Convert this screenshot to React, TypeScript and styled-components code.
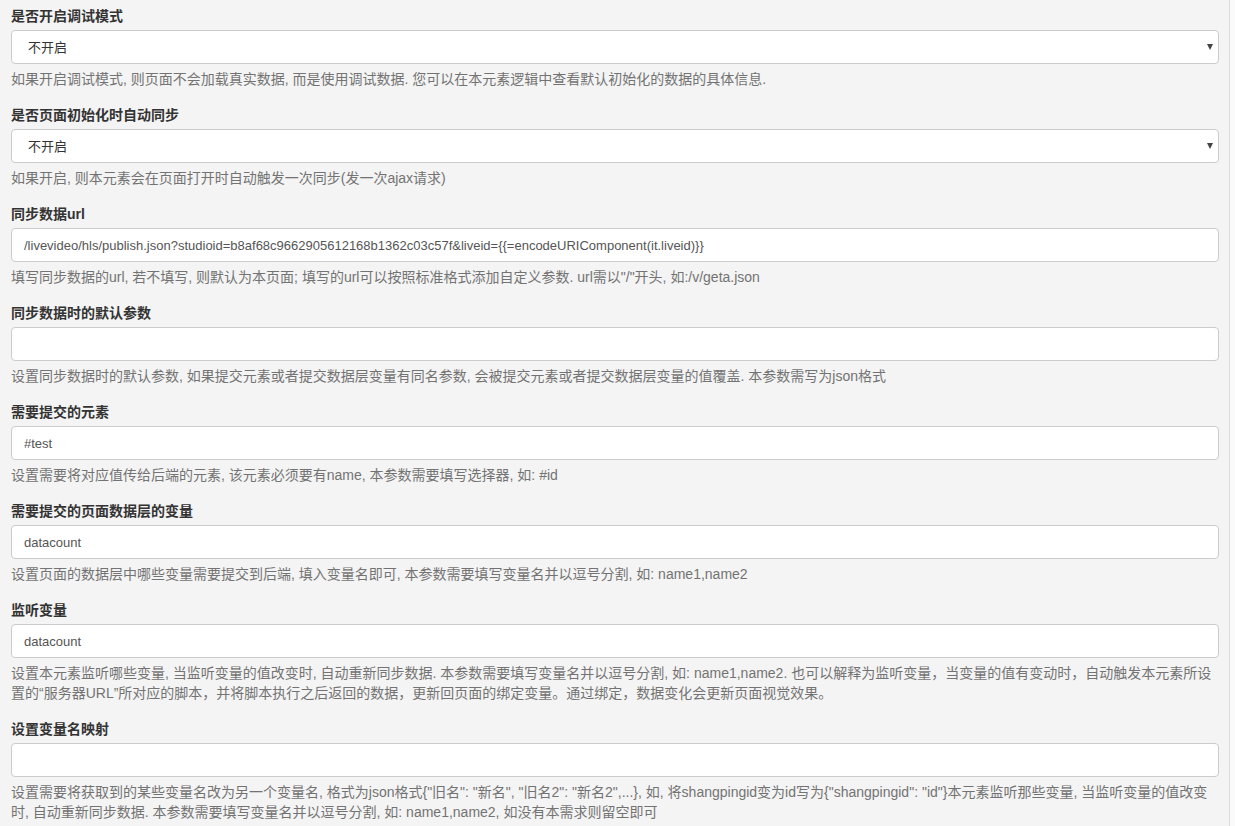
import React from 'react';
import styled, { createGlobalStyle } from 'styled-components';

const GlobalStyle = createGlobalStyle`
  html, body {
    margin: 0;
    padding: 0;
    background: #fafafa;
  }
  body {
    font-family: "Liberation Sans", "Noto Sans CJK SC", sans-serif;
    font-size: 14px;
    line-height: 20px;
    color: #333;
  }
`;

const Panel = styled.div`
  width: 1208px;
  min-height: 826px;
  box-sizing: content-box;
  padding: 6px 10px 0 11px;
  background: #f4f4f4;
  border-right: 1px solid #dcdcdc;
`;

const FormGroup = styled.div`
  display: flex;
  flex-direction: column;
  margin-bottom: 16px;
`;

const Label = styled.label`
  font-weight: bold;
  font-size: 14px;
  line-height: 20px;
  color: #333;
  margin-bottom: 4px;
`;

const TextInput = styled.input`
  box-sizing: border-box;
  width: 100%;
  height: 34px;
  padding: 6px 12px;
  font-family: inherit;
  font-size: 13px;
  color: #555;
  background: #fff;
  border: 1px solid #ccc;
  border-radius: 4px;
  outline: none;
`;

const SelectWrap = styled.div`
  position: relative;

  &::after {
    content: '';
    position: absolute;
    right: 6px;
    top: 14px;
    border-left: 3.5px solid transparent;
    border-right: 3.5px solid transparent;
    border-top: 6px solid #444;
    pointer-events: none;
  }
`;

const Select = styled.select`
  box-sizing: border-box;
  width: 100%;
  height: 34px;
  padding: 6px 16px;
  appearance: none;
  font-family: inherit;
  font-size: 13px;
  color: #333;
  background: #fff;
  border: 1px solid #ccc;
  border-radius: 4px;
  outline: none;
`;

const Help = styled.p`
  margin: 5px 0 0;
  font-size: 14px;
  line-height: 20px;
  color: #737373;
`;

type Field = {
  label: string;
  kind: 'select' | 'input';
  value: string;
  help: string;
};

const fields: Field[] = [
  {
    label: '是否开启调试模式',
    kind: 'select',
    value: '不开启',
    help: '如果开启调试模式, 则页面不会加载真实数据, 而是使用调试数据. 您可以在本元素逻辑中查看默认初始化的数据的具体信息.',
  },
  {
    label: '是否页面初始化时自动同步',
    kind: 'select',
    value: '不开启',
    help: '如果开启, 则本元素会在页面打开时自动触发一次同步(发一次ajax请求)',
  },
  {
    label: '同步数据url',
    kind: 'input',
    value: '/livevideo/hls/publish.json?studioid=b8af68c9662905612168b1362c03c57f&liveid={{=encodeURIComponent(it.liveid)}}',
    help: '填写同步数据的url, 若不填写, 则默认为本页面; 填写的url可以按照标准格式添加自定义参数. url需以"/"开头, 如:/v/geta.json',
  },
  {
    label: '同步数据时的默认参数',
    kind: 'input',
    value: '',
    help: '设置同步数据时的默认参数, 如果提交元素或者提交数据层变量有同名参数, 会被提交元素或者提交数据层变量的值覆盖. 本参数需写为json格式',
  },
  {
    label: '需要提交的元素',
    kind: 'input',
    value: '#test',
    help: '设置需要将对应值传给后端的元素, 该元素必须要有name, 本参数需要填写选择器, 如: #id',
  },
  {
    label: '需要提交的页面数据层的变量',
    kind: 'input',
    value: 'datacount',
    help: '设置页面的数据层中哪些变量需要提交到后端, 填入变量名即可, 本参数需要填写变量名并以逗号分割, 如: name1,name2',
  },
  {
    label: '监听变量',
    kind: 'input',
    value: 'datacount',
    help: '设置本元素监听哪些变量, 当监听变量的值改变时, 自动重新同步数据. 本参数需要填写变量名并以逗号分割, 如: name1,name2. 也可以解释为监听变量，当变量的值有变动时，自动触发本元素所设置的“服务器URL”所对应的脚本，并将脚本执行之后返回的数据，更新回页面的绑定变量。通过绑定，数据变化会更新页面视觉效果。',
  },
  {
    label: '设置变量名映射',
    kind: 'input',
    value: '',
    help: '设置需要将获取到的某些变量名改为另一个变量名, 格式为json格式{"旧名": "新名", "旧名2": "新名2",...}, 如, 将shangpingid变为id写为{"shangpingid": "id"}本元素监听那些变量, 当监听变量的值改变时, 自动重新同步数据. 本参数需要填写变量名并以逗号分割, 如: name1,name2, 如没有本需求则留空即可',
  },
];

const App: React.FC = () => {
  return (
    <>
      <GlobalStyle />
      <Panel>
        {fields.map((f) => (
          <FormGroup key={f.label}>
            <Label>{f.label}</Label>
            {f.kind === 'select' ? (
              <SelectWrap>
                <Select defaultValue="0">
                  <option value="0">{f.value}</option>
                  <option value="1">开启</option>
                </Select>
              </SelectWrap>
            ) : (
              <TextInput type="text" defaultValue={f.value} />
            )}
            <Help>{f.help}</Help>
          </FormGroup>
        ))}
      </Panel>
    </>
  );
};

export default App;
